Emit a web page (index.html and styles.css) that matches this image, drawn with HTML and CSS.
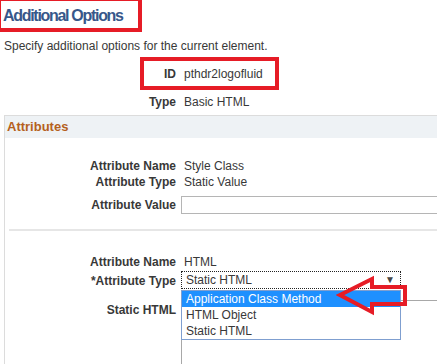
FILE: index.html
```html
<!DOCTYPE html>
<html lang="en">

<head>
    <meta charset="UTF-8">
    <title>Additional Options</title>
    <link rel="stylesheet" href="styles.css">
</head>

<body>
    <div class="page">
        <h1 class="page-title">Additional Options</h1>
        <p class="intro">Specify additional options for the current element.</p>

        <div class="fields">
            <div class="row">
                <span class="lbl">ID</span>
                <span class="val">pthdr2logofluid</span>
            </div>
            <div class="row">
                <span class="lbl">Type</span>
                <span class="val">Basic HTML</span>
            </div>
        </div>

        <section class="group">
            <div class="group-head">Attributes</div>

            <div class="attr attr-first">
                <div class="row">
                    <span class="lbl">Attribute Name</span>
                    <span class="val">Style Class</span>
                </div>
                <div class="row">
                    <span class="lbl">Attribute Type</span>
                    <span class="val">Static Value</span>
                </div>
                <div class="row row-input">
                    <span class="lbl">Attribute Value</span>
                    <div class="text-input"></div>
                </div>
            </div>

            <div class="sep"></div>

            <div class="attr attr-second">
                <div class="row">
                    <span class="lbl">Attribute Name</span>
                    <span class="val">HTML</span>
                </div>
                <div class="row row-select">
                    <span class="lbl">*Attribute Type</span>
                    <div class="select">
                        <span>Static HTML</span>
                        <span class="caret">&#9660;</span>
                        <ul class="options">
                            <li class="selected">Application Class Method</li>
                            <li>HTML Object</li>
                            <li>Static HTML</li>
                        </ul>
                    </div>
                </div>
                <div class="row row-area">
                    <span class="lbl">Static HTML</span>
                    <div class="text-area"></div>
                </div>
            </div>
        </section>

        <!-- annotations drawn on top of the screenshot -->
        <span class="mark mark-title"></span>
        <span class="mark mark-id"></span>
        <svg class="arrow" width="76" height="42" viewBox="0 0 76 42">
            <polygon points="4,20 36,4 36,12 69,12 69,29 36,29 36,37" fill="none" stroke="#e61c26"
                stroke-width="4" stroke-linejoin="miter" />
        </svg>
    </div>
</body>

</html>
```

FILE: styles.css
```css
:root {
    --text-color: #383838;
    --title-color: #37578a;
    --group-color: #b5611d;
    --border-color: #dcdcdc;
    --mark-color: #e61c26;
    --pick-color: #1e90ff;
}

* {
    box-sizing: border-box;
}

body {
    margin: 0;
    font-family: "Liberation Sans", Arial, sans-serif;
    font-size: 12px;
    line-height: 16px;
    color: var(--text-color);
    background: white;
    overflow: hidden;
}

.page {
    position: relative;
    width: 437px;
    height: 364px;
    overflow: hidden;
}

.page-title {
    margin: 0;
    padding-left: 3px;
    height: 31px;
    line-height: 31px;
    font-size: 16px;
    letter-spacing: -1.3px;
    color: var(--title-color);
}

.intro {
    margin: 7px 0 0 4px;
}

.fields {
    margin-top: 12px;
    display: flex;
    flex-direction: column;
    gap: 12px;
}

.row {
    display: grid;
    grid-template-columns: 176px 1fr;
    column-gap: 5px;
    align-items: center;
    min-height: 16px;
}

.lbl {
    text-align: right;
    font-weight: bold;
}

.val {
    padding-left: 3px;
    white-space: nowrap;
}

/* Attributes box */
.group {
    margin: 5px 0 0 4px;
    border-top: 1px solid var(--border-color);
    border-left: 1px solid var(--border-color);
}

.group .row {
    grid-template-columns: 171px 1fr;
}

.group-head {
    height: 22px;
    line-height: 22px;
    padding-left: 2px;
    background: #eef2f5;
    color: var(--group-color);
    font-weight: bold;
    font-size: 13px;
}

.attr-first {
    padding-top: 20px;
}

.row-input {
    margin-top: 6px;
}

.text-input {
    height: 18px;
    width: 300px;
    border: 1px solid #b5b5b5;
}

.sep {
    margin: 15px 0 0 4px;
    height: 2px;
    background: #e6e6e6;
}

.attr-second {
    padding-top: 23px;
}

.row-select {
    margin-top: 1px;
}

.row-select .lbl {
    padding-top: 2px;
}

.select {
    position: relative;
    width: 220px;
    height: 18px;
    border: 1px dotted #222;
    padding-left: 4px;
    line-height: 16px;
    display: flex;
    justify-content: space-between;
}

.caret {
    font-size: 10px;
    color: #444;
    padding-right: 5px;
}

.options {
    position: absolute;
    top: 18px;
    left: -1px;
    width: 220px;
    margin: 0;
    padding: 0;
    list-style: none;
    background: white;
    border: 1px solid #7f9fd0;
    z-index: 2;
}

.options li {
    height: 16px;
    line-height: 16px;
    padding-left: 4px;
}

.options .selected {
    background: var(--pick-color);
    color: white;
}

.row-area {
    margin-top: 11px;
    align-items: start;
}

.row-area .lbl {
    padding-top: 2px;
}

.text-area {
    height: 80px;
    width: 300px;
    border-top: 1px solid #a8a8a8;
    border-left: 1px solid #a8a8a8;
}

/* red callouts */
.mark {
    position: absolute;
    border: 4px solid var(--mark-color);
    z-index: 3;
}

.mark-title {
    left: -3px;
    top: -3px;
    width: 145px;
    height: 35px;
}

.mark-id {
    left: 140px;
    top: 57px;
    width: 139px;
    height: 33px;
}

.arrow {
    position: absolute;
    left: 336px;
    top: 275px;
    z-index: 3;
}
```
